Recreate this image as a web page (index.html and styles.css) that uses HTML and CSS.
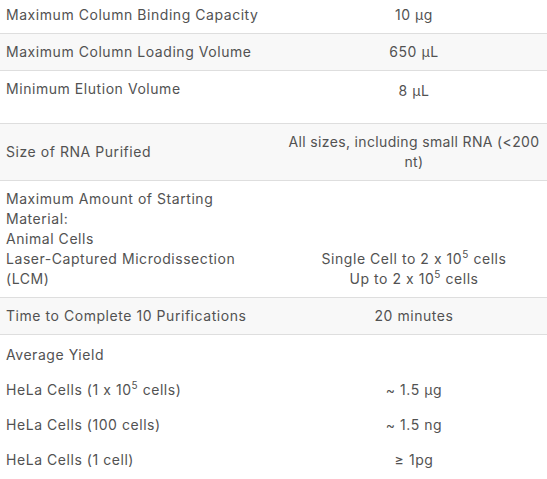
FILE: index.html
```html
<!DOCTYPE html>
<html lang="en">
<head>
<meta charset="utf-8">
<title>Specifications</title>
<link rel="stylesheet" href="styles.css">
</head>
<body>
<table class="spec">
  <colgroup><col class="c-label"><col class="c-value"></colgroup>
  <tbody>
    <tr class="row lined">
      <td class="label">Maximum Column Binding Capacity</td>
      <td class="value">10 µg</td>
    </tr>
    <tr class="row lined alt">
      <td class="label">Maximum Column Loading Volume</td>
      <td class="value">650 µL</td>
    </tr>
    <tr class="row lined elution">
      <td class="label">Minimum Elution Volume</td>
      <td class="value">8 µL</td>
    </tr>
    <tr class="row lined alt middle">
      <td class="label">Size of RNA Purified</td>
      <td class="value sizes">All sizes, including small RNA (&lt;200 nt)</td>
    </tr>
    <tr class="row lined starting">
      <td class="label">Maximum Amount of Starting Material:<br>Animal Cells<br>Laser-Captured Microdissection (LCM)</td>
      <td class="value">Single Cell to 2 x 10<sup>5</sup> cells<br>Up to 2 x 10<sup>5</sup> cells</td>
    </tr>
    <tr class="row lined alt">
      <td class="label">Time to Complete 10 Purifications</td>
      <td class="value">20 minutes</td>
    </tr>
    <tr class="row plain">
      <td class="label">Average Yield</td>
      <td class="value"></td>
    </tr>
    <tr class="row plain">
      <td class="label">HeLa Cells (1 x 10<sup>5</sup> cells)</td>
      <td class="value">~ 1.5 µg</td>
    </tr>
    <tr class="row plain">
      <td class="label">HeLa Cells (100 cells)</td>
      <td class="value">~ 1.5 ng</td>
    </tr>
    <tr class="row plain">
      <td class="label">HeLa Cells (1 cell)</td>
      <td class="value">≥ 1pg</td>
    </tr>
  </tbody>
</table>
</body>
</html>
```

FILE: styles.css
```css
html, body {
  margin: 0;
  padding: 0;
  background: #ffffff;
}

body {
  font-family: "Inter", "Open Sans", sans-serif;
  font-size: 14px;
  letter-spacing: 0.55px;
  color: #525252;
  overflow: hidden;
}

.spec {
  width: 547px;
  margin-top: -3px;
  border-collapse: separate;
  border-spacing: 0;
  table-layout: fixed;
}

.c-label { width: 281px; }
.c-value { width: 266px; }

.spec td {
  line-height: 20px;
  padding: 8px 6px;
  vertical-align: top;
}

.spec .value {
  text-align: center;
}

.row.lined td {
  border-bottom: 1px solid #dedede;
}

.row.alt td {
  background: #f8f8f8;
}

.row.elution .label {
  padding-bottom: 24px;
}

.row.elution .value {
  padding-top: 10px;
  padding-bottom: 22px;
}

.row.middle td {
  vertical-align: middle;
}

.spec .value.sizes {
  padding-left: 1px;
  padding-right: 1px;
  letter-spacing: 0.35px;
}

.row.starting .label {
  padding-right: 40px;
}

.row.starting .value {
  vertical-align: bottom;
}

.row.plain td {
  padding-top: 10px;
  padding-bottom: 5px;
}

sup {
  font-size: 10px;
  line-height: 0;
  vertical-align: 6px;
}
```
